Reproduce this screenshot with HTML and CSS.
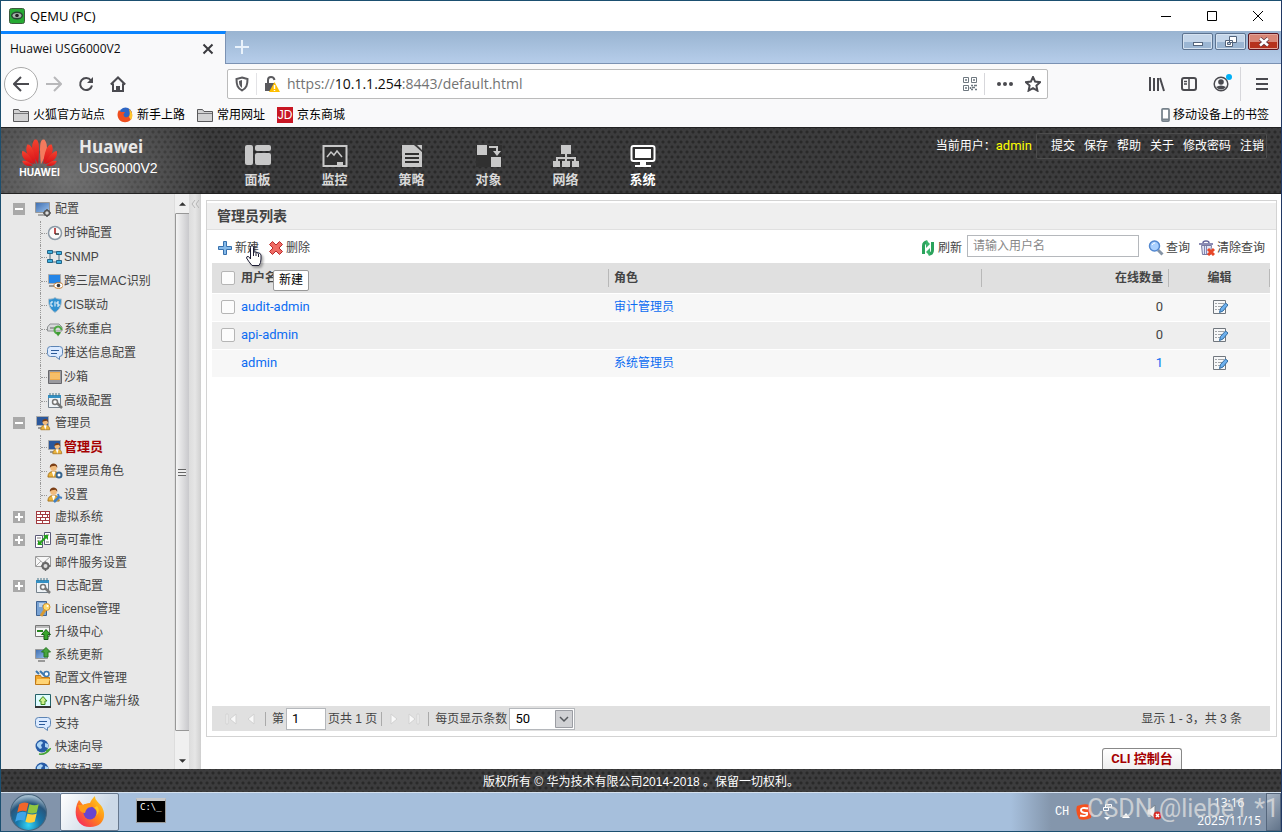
FILE: index.html
```html
<!DOCTYPE html>
<html lang="zh-CN">
<head>
    <meta charset="UTF-8">
    <meta name="viewport" content="width=device-width, initial-scale=1.0">
    <title>Huawei USG6000V2</title>
    <link rel="stylesheet" href="styles.css">
</head>
<body>
    <!-- 图标 -->
    <svg class="sprite" aria-hidden="true">
        <defs>
            <linearGradient id="gScreen" x1="0" y1="0" x2="1" y2="1"><stop offset="0" stop-color="#3d6db0"/><stop offset="1" stop-color="#9cc3ee"/></linearGradient>
            <linearGradient id="gRed" x1="0" y1="0" x2="0" y2="1"><stop offset="0" stop-color="#f4432f"/><stop offset="1" stop-color="#d60f16"/></linearGradient>
            <linearGradient id="gFox" x1="1" y1="0" x2="0" y2="1"><stop offset="0" stop-color="#ffe226"/><stop offset=".45" stop-color="#ff8a16"/><stop offset="1" stop-color="#f5156c"/></linearGradient>
            <radialGradient id="gOrb" cx=".5" cy=".85" r=".8"><stop offset="0" stop-color="#35d5f5"/><stop offset=".4" stop-color="#1677ab"/><stop offset=".75" stop-color="#28567c"/><stop offset="1" stop-color="#9fb9cc"/></radialGradient>
        </defs>
        <symbol id="i-folder" viewBox="0 0 16 16"><path d="M.5 14.500v-12h5l1.500 2h8.500v10z" fill="#d2d2d3" stroke="#58585a"/><path d="M1 6.500h14" stroke="#77777a"/></symbol>
        <symbol id="i-firefox" viewBox="0 0 32 32"><path d="M3 8L5 4l4 5c2-1 4-2 7-2 1-3 3-5 5-7 0 5 4 6 7 11 5 9 1 20-12 20C4 31-1 20 3 8z" fill="url(#gFox)"/><circle cx="16" cy="17" r="6.500" fill="#6845cf"/><path d="M4 9l5 0c3-2 7-1 9 2-5 0-6 3-7 6-4 0-6-3-7-8z" fill="#ff9b19"/><path d="M20 12c3 1 4 4 2 8 3-3 4-7 1-10z" fill="#ffcb20"/></symbol>
        <symbol id="i-firefox-old" viewBox="0 0 16 16"><circle cx="8.500" cy="7" r="6.500" fill="#2d65c4"/><path d="M2 3l2 2 4 0-1.500 2.500C7 11 10 11 12 9c2-2 1-5 0-7 4 3 4 8 1.500 11-3 3-8 3-11 0C0 10 0 6 2 3z" fill="#ee4e1f"/><path d="M12 2c4 3 4 8 2 11l-2-3c1-2 1-5 0-8z" fill="#ffc62b"/></symbol>
        <symbol id="i-expand" viewBox="0 0 12 12"><path d="M0 0h12v12H0z" fill="#a9a9a9"/><path d="M2 6h8M6 2v8" stroke="#fff" stroke-width="2"/></symbol>
        <symbol id="i-collapse" viewBox="0 0 12 12"><path d="M0 0h12v12H0z" fill="#a9a9a9"/><path d="M2 6h8" stroke="#fff" stroke-width="2"/></symbol>
        <symbol id="i-config" viewBox="0 0 16 16"><path d="M.5 1.500h14v10H.5z" fill="url(#gScreen)" stroke="#999"/><path d="M3 14h7" stroke="#aaa" stroke-width="2"/><circle cx="12" cy="12" r="2.500" fill="#ddd" stroke="#555" stroke-width="1.500"/><path d="M12 8v1.500M12 14.500V16M8 12h1.500M14.500 12H16" stroke="#555" stroke-width="1.500"/></symbol>
        <symbol id="i-clock" viewBox="0 0 16 16"><circle cx="8" cy="8" r="6.500" fill="#fafafa" stroke="#8b99a6" stroke-width="1.500"/><path d="M8 3v6" stroke="#a61515" stroke-width="1.500"/><path d="M8 9h4" stroke="#333" stroke-width="1.500"/></symbol>
        <symbol id="i-snmp" viewBox="0 0 16 16"><path d="M3 4v8M12 4v8M3 3h9M3 13h9" stroke="#4d6b7c" fill="none"/><g fill="#3eb1e0" stroke="#256487"><path d="M.5 1.500h5v3h-5zM9.500 2.500h5v3h-5zM.5 10.500h5v3h-5zM9.500 11.500h5v3h-5z"/></g></symbol>
        <symbol id="i-mac" viewBox="0 0 16 16"><path d="M1.500 1.500h12v9h-12z" fill="#2485e7" stroke="#aaa"/><path d="M2 13h6" stroke="#999" stroke-width="2"/><ellipse cx="11.500" cy="12.500" rx="4.500" ry="2.800" fill="#fff" stroke="#c57827"/><circle cx="11.500" cy="12.500" r="1.800" fill="#3b3c40"/></symbol>
        <symbol id="i-cis" viewBox="0 0 16 16"><path d="M8 .5c2 1.500 4 1.500 6.500 1.500 0 6-1 10-6.500 13.500C2.500 12 1.500 8 1.500 2 4 2 6 2 8 .5z" fill="#2f91d1" stroke="#b5c3cc"/><path d="M6 5H4v4h2M8 4.500v5M12 5h-2v2h2v2h-2" stroke="#fff" fill="none"/></symbol>
        <symbol id="i-restart" viewBox="0 0 16 16"><path d="M.5 6l2.500-3h9l3 3v4H.5z" fill="#d7d9da" stroke="#8e9193"/><path d="M3 7h5" stroke="#666"/><path d="M14.500 9a3.500 3.500 0 1 0-1.500 3" stroke="#4fa944" stroke-width="2" fill="none"/><path d="M9 11h5l-3 4.500z" fill="#3f9b33"/></symbol>
        <symbol id="i-message" viewBox="0 0 16 16"><path d="M3.500 1.500h9q3 0 3 3v4q0 3-3 3l0 3-4-3h-5q-3 0-3-3v-4q0-3 3-3z" fill="#dbeaff" stroke="#5c84b4"/><path d="M4 5.500h8M4 8.500h6" stroke="#2c5a98"/></symbol>
        <symbol id="i-sandbox" viewBox="0 0 16 16"><path d="M1.500 1.500h13v13h-13z" fill="#9a9a9e" stroke="#66666b"/><path d="M3 3h10v8H3z" fill="#eeaa4b"/><path d="M3 5h10M3 7h10M3 9h10" stroke="#ffd386"/></symbol>
        <symbol id="i-advanced" viewBox="0 0 16 16"><path d="M1.500 2.500h12v12h-12z" fill="#eef3f7" stroke="#76828c"/><path d="M1 2h13v3H1z" fill="#3390c4"/><path d="M3 0v3M6 0v3M9 0v3M12 0v3" stroke="#467286"/><circle cx="8" cy="9" r="2.500" fill="#fff" stroke="#777" stroke-width="1.500"/><path d="M10 10l5 5" stroke="#777" stroke-width="2.500"/></symbol>
        <symbol id="i-person" viewBox="0 0 16 16"><path d="M1 15c0-4 2-6 6-6s6 2 6 6z" fill="#eab33c" stroke="#a7731c"/><path d="M5 9l2 6 2-6z" fill="#fff"/><circle cx="7" cy="5" r="3.500" fill="#f1bb7c"/><path d="M3 5c-.5-6 8.500-6 8 0l-2-2-4 .5z" fill="#7b3e15"/></symbol>
        <symbol id="i-admin" viewBox="0 0 16 16"><path d="M1.500 1.500h12v9h-12z" fill="#2b589c" stroke="#aaa"/><path d="M3 13h4" stroke="#999" stroke-width="2"/><use href="#i-person" x="5" y="3" width="12" height="13"/></symbol>
        <symbol id="i-role" viewBox="0 0 16 16"><use href="#i-person" width="15" height="15"/><circle cx="12" cy="12" r="2.500" fill="#fff" stroke="#38658e" stroke-width="2"/></symbol>
        <symbol id="i-setting" viewBox="0 0 16 16"><use href="#i-person" width="15" height="15"/><path d="M7 15l5-5" stroke="#3f7fc4" stroke-width="2.500"/><path d="M11 7l1 3 3 1" stroke="#3f7fc4" stroke-width="2" fill="none"/></symbol>
        <symbol id="i-vsys" viewBox="0 0 16 16"><path d="M1 2h14v13H1z" fill="#fff"/><path d="M1 2.500h14M1 5.500h14M1 8.500h14M1 11.500h14M1 14.500h14M1.500 2v13M14.500 2v13M5.500 3v2M10.500 3v2M7.500 6v2M12.500 6v2M5.500 9v2M10.500 9v2M7.500 12v2" stroke="#a23b40"/></symbol>
        <symbol id="i-ha" viewBox="0 0 16 16"><path d="M.5 3.500h7v12h-7zM9.500 .5h6v12h-6z" fill="#fff" stroke="#5b5a78"/><path d="M2 6h4M2 9h4M2 12h4M11 3h3M11 10h3" stroke="#777"/><path d="M5 11l6-6" stroke="#25a11c" stroke-width="2"/><path d="M8 3h5v5zM3 8v5h5z" fill="#25a11c"/></symbol>
        <symbol id="i-mail" viewBox="0 0 16 16"><path d="M.5 1.500h15v10H.5z" fill="#f7f7f7" stroke="#999"/><path d="M1 2l7 6 7-6M1 11l5-5M15 11l-5-5" stroke="#aaa" fill="none"/><circle cx="10.500" cy="11" r="3" fill="#ddd" stroke="#686868" stroke-width="2"/><path d="M10.500 6.500v2M10.500 14v2M6 11h2M13.500 11h2" stroke="#686868" stroke-width="1.500"/></symbol>
        <symbol id="i-license" viewBox="0 0 16 16"><path d="M1.500 .5h10v14h-10z" fill="#79a3d4" stroke="#3e6291"/><path d="M4 3h5M4 5h3" stroke="#fff"/><path d="M10 9l-4 6" stroke="#d99a31" stroke-width="3"/><circle cx="11.500" cy="6" r="3.500" fill="#ffdc70" stroke="#d5912b"/><circle cx="12.500" cy="5" r="1" fill="#fff"/></symbol>
        <symbol id="i-upgrade" viewBox="0 0 16 16"><path d="M.5 1.500h14v11H.5z" fill="#f7f7f7" stroke="#777"/><path d="M1 3h13" stroke="#bbb" stroke-width="2"/><path d="M2 7h6" stroke="#26851d" stroke-width="2"/><path d="M11 5.500l4.500 5H13v5H9v-5H6.500z" fill="#39a52b" stroke="#195e16"/></symbol>
        <symbol id="i-update" viewBox="0 0 16 16"><path d="M.5 2.500h12v9H.5z" fill="url(#gScreen)" stroke="#999"/><path d="M3 14h7" stroke="#999" stroke-width="2"/><path d="M11 .5L15.500 5H13v5H9V5H6.500z" fill="#47a53e" stroke="#277622"/></symbol>
        <symbol id="i-files" viewBox="0 0 16 16"><path d="M1 1l3 3M5 1l5 5" stroke="#3d78ae" stroke-width="2"/><circle cx="11.500" cy="4" r="2.500" fill="#fff" stroke="#3d78ae" stroke-width="1.500"/><path d="M.5 14.500v-9h5l1 2h8v7z" fill="#f2a82f" stroke="#bf7919"/><path d="M2 9h13l-2 5H1z" fill="#ffd475"/></symbol>
        <symbol id="i-vpn" viewBox="0 0 16 16"><path d="M.5 1.500h15v13H.5z" fill="#dffcff" stroke="#246168"/><path d="M0 14h16" stroke="#333" stroke-width="2"/><path d="M8 3.500L12 8h-2v3.500H6V8H4z" fill="#cef08f" stroke="#3a8b1e"/></symbol>
        <symbol id="i-globe" viewBox="0 0 16 16"><circle cx="7" cy="7" r="6.500" fill="#275ca7"/><path d="M2 5c3-4 5-3 6-1L6 6l1 3-2 1-3-3zM10 4l3 1v4l-3-1z" fill="#add6f6"/><path d="M4 15q7 1 11-5l-4 2" fill="none" stroke="#42a334" stroke-width="1.500"/></symbol>
        <symbol id="i-plus" viewBox="0 0 16 16"><path d="M6.500 1.500h3v5h5v3h-5v5h-3v-5h-5v-3h5z" fill="#85b9e8" stroke="#3770ad"/></symbol>
        <symbol id="i-delete" viewBox="0 0 16 16"><path d="M4.500 1.500L8 5l3.500-3.500 3 3L11 8l3.500 3.500-3 3L8 11l-3.500 3.500-3-3L5 8 1.500 4.500z" fill="#ef6b64" stroke="#b92c2c"/></symbol>
        <symbol id="i-refresh" viewBox="0 0 16 16"><path d="M3.500 14V6q0-4 4-4M12.500 2v8q0 4-4 4" fill="none" stroke="#2ba35c" stroke-width="3"/><path d="M6 0l4 4-4 4zM10 8v8l-4-4z" fill="#39b46b"/></symbol>
        <symbol id="i-search" viewBox="0 0 16 16"><path d="M10 10l4.500 4.500" stroke="#8694a5" stroke-width="3"/><circle cx="6.500" cy="6" r="5" fill="#aad1ff" stroke="#5287cf" stroke-width="1.500"/><path d="M4 5q1-2 3-2" stroke="#fff" fill="none"/></symbol>
        <symbol id="i-clear" viewBox="0 0 16 16"><path d="M0 4h14M4 3q0-2 3-2t3 2" stroke="#65659a" stroke-width="1.500" fill="none"/><path d="M2.500 5.500h10l-1 9h-8z" fill="#e1e4f5" stroke="#777aa2"/><path d="M5.500 6v8M7.500 6v8" stroke="#8588b2"/><path d="M9 9l6 6M15 9l-6 6" stroke="#e74728" stroke-width="3"/></symbol>
        <symbol id="i-edit" viewBox="0 0 16 16"><path d="M1.500 1.500h12v13h-12z" fill="#f7f8f9" stroke="#71777e"/><path d="M3 4.500h2M6 4.500h6M3 7.500h2M6 7.500h4M3 10.500h2M6 10.500h2" stroke="#a2a5a8"/><path d="M7.500 13.500l1-4 5-5.500 2.500 2-5 6z" fill="#6db0ee" stroke="#326b9f"/></symbol>
    </svg>

    <div class="window">
        <header class="titlebar">
            <svg class="qemu" viewBox="0 0 16 16"><rect x=".5" y=".5" width="15" height="15" rx="2" fill="#26aa33" stroke="#3d5a3d"/><ellipse cx="8" cy="7.500" rx="6" ry="4" fill="#294434"/><ellipse cx="8" cy="7.500" rx="4.500" ry="2.500" fill="#a8b3aa"/><circle cx="8" cy="7.500" r="1.800" fill="#222"/></svg>
            <span>QEMU (PC)</span>
            <div class="window-btns">
                <button aria-label="最小化"><svg viewBox="0 0 12 12"><path d="M1 6.500h10"/></svg></button>
                <button aria-label="最大化"><svg viewBox="0 0 12 12"><path d="M1.500 1.500h9v9h-9z"/></svg></button>
                <button aria-label="关闭"><svg viewBox="0 0 12 12"><path d="M1 1l10 10M11 1L1 11"/></svg></button>
            </div>
        </header>

        <div class="tabs">
            <div class="tab">
                <span>Huawei USG6000V2</span>
                <button aria-label="关闭标签页"><svg viewBox="0 0 12 12"><path d="M1.500 1.500l9 9M10.500 1.500l-9 9"/></svg></button>
            </div>
            <button class="tab-new" aria-label="新建标签页"><svg viewBox="0 0 16 16"><path d="M8 1v14M1 8h14"/></svg></button>
            <div class="aero-btns">
                <button aria-label="最小化"><svg viewBox="0 0 16 12"><rect x="3.500" y="6.500" width="9" height="3" fill="#fff" stroke="#53647b"/></svg></button>
                <button aria-label="还原"><svg viewBox="0 0 16 12"><path d="M6.500 .5h7v6h-7zM2.500 4.500h7v6h-7z" fill="#fff" stroke="#53647b"/><path d="M4.500 6.500h3v2h-3z" fill="#b7c9de" stroke="#53647b"/></svg></button>
                <button class="aero-close" aria-label="关闭"><svg viewBox="0 0 16 12"><path d="M4 2.500l8 7M12 2.500l-8 7" stroke="#5b3440" stroke-width="4"/><path d="M4 2.500l8 7M12 2.500l-8 7" stroke="#fff" stroke-width="2.500"/></svg></button>
            </div>
        </div>

        <div class="navbar">
            <div class="nav-left">
                <button class="nav-back" aria-label="后退"><svg viewBox="0 0 16 16"><path d="M16 8H1M8 1L1 8l7 7"/></svg></button>
                <button class="nav-forward" aria-label="前进"><svg viewBox="0 0 16 16"><path d="M0 8h15M8 1l7 7-7 7"/></svg></button>
                <button aria-label="刷新页面"><svg viewBox="0 0 16 16"><path d="M13 4.500A6 6 0 1 0 14 9.500"/><path d="M15 1v6H9z" fill="#4a4a4f" stroke="none"/></svg></button>
                <button aria-label="主页"><svg viewBox="0 0 16 16"><path d="M.8 8.500L8 1.500l7.200 7M3 7.500V15h10V7.500M7 15v-4h2v4"/></svg></button>
            </div>
            <div class="urlbar">
                <svg class="ico" viewBox="0 0 16 16"><path d="M8 1.500l5.500 1.500c0 6-1 9-5.500 11.500C3.500 12 2.500 9 2.500 3z" fill="none" stroke="#5a5a5e" stroke-width="2"/><path d="M8 4v8C5.500 10 5 8 5 5z" fill="#5a5a5e"/></svg>
                <svg class="ico lock" viewBox="0 0 16 16"><path d="M4 8V4q0-3 3-3t3.500 3" fill="none" stroke="#5a5a5e" stroke-width="2"/><path d="M1 7h9v8H1z" fill="#5a5a5e"/><path d="M10.500 6l5.500 10H5z" fill="#ffbf00"/><path d="M10.500 9v4M10.500 14v1" stroke="#fff" stroke-width="1.500"/></svg>
                <div class="url" role="textbox" aria-label="网址" contenteditable="true" spellcheck="false">https://<b>10.1.1.254</b>:8443/default.html</div>
                <svg class="ico" viewBox="0 0 16 16" fill="none" stroke="#6e7880"><path d="M1.500 1.500h5v5h-5zM9.500 1.500h5v5h-5zM1.500 9.500h5v5h-5z"/><path d="M3 4h2M11 4h2M3 12h2M9 9.500h2M12 9.500h3M10 11.500h3M9 13.500h2M13 13.500h2M8.500 11v2" stroke-width="1.500"/></svg>
                <i class="url-sep"></i>
                <button aria-label="页面操作"><svg class="ico" viewBox="0 0 16 16" fill="#4a4a4f"><circle cx="2" cy="8" r="2"/><circle cx="8" cy="8" r="2"/><circle cx="14" cy="8" r="2"/></svg></button>
                <button aria-label="添加书签"><svg class="ico" viewBox="0 0 16 16"><path d="M8 1l2.100 4.600 5 .6-3.700 3.400 1 5L8 12.100l-4.400 2.500 1-5L.9 6.200l5-.6z" fill="none" stroke="#4a4a4f" stroke-width="2"/></svg></button>
            </div>
            <div class="nav-right">
                <button aria-label="书签库"><svg viewBox="0 0 16 16"><path d="M1 1v14M5 2v13M9 2v13M11 2l4 13"/></svg></button>
                <button aria-label="侧栏"><svg viewBox="0 0 16 16"><rect x="1" y="2" width="14" height="12" rx="2"/><path d="M8 2v12M3 5.500h3M3 8h3" stroke-width="1.500"/></svg></button>
                <button class="account" aria-label="账户"><svg viewBox="0 0 16 16"><circle cx="8" cy="8" r="6.800" stroke-width="1.500"/><circle cx="8" cy="6" r="2.800" fill="#4a4a4f" stroke="none"/><path d="M3 11q5-3 10 0-5 5-10 0z" fill="#4a4a4f" stroke="none"/></svg></button>
                <i class="url-sep"></i>
                <button aria-label="菜单"><svg viewBox="0 0 16 16"><path d="M2 3h12M2 8h12M2 13h12"/></svg></button>
            </div>
        </div>

        <nav class="bookmarks">
            <a href="#"><svg class="ico"><use href="#i-folder"/></svg>火狐官方站点</a>
            <a href="#"><svg class="ico"><use href="#i-firefox-old"/></svg>新手上路</a>
            <a href="#"><svg class="ico"><use href="#i-folder"/></svg>常用网址</a>
            <a href="#"><span class="jd">JD</span>京东商城</a>
            <a href="#" class="mobile"><svg viewBox="0 0 10 16"><rect x="1" y="1" width="8" height="14" rx="1" fill="#fff" stroke="#76818a" stroke-width="2"/><path d="M1 13h8" stroke="#76818a" stroke-width="2"/></svg>移动设备上的书签</a>
        </nav>

        <div class="banner">
            <div class="brand">
                <div class="logo">
                    <svg viewBox="0 0 40 32" fill="url(#gRed)"><path d="M18.500 29C12 19 10 9 14.500 3c5-2 6 6 4 26z"/><path d="M21.500 29C28 19 30 9 25.500 3c-5-2-6 6-4 26z" fill="#f47a5d"/><path d="M16 29C7 21 4 15 7 8c4-1 8 7 9 21zM24 29c9-8 12-14 9-21-4-1-8 7-9 21z"/><path d="M14.500 29C5 27 0 22 1.500 15 6 15 11 22 14.500 29zM25.500 29c9.500-2 14.500-7 13-14-4.500 0-9.500 7-13 14z"/><path d="M13 30.500C7 32 3 30 1.500 25.500 6 24.500 10 27 13 30.500zM27 30.500c6 1.500 10-.5 11.500-5C34 24.500 30 27 27 30.500z"/></svg>
                    <span>HUAWEI</span>
                </div>
                <div class="product">
                    <strong>Huawei</strong>
                    <span>USG6000V2</span>
                </div>
            </div>
            <nav class="modules">
                <a href="#"><svg viewBox="0 0 26 22"><rect width="8" height="20" rx="2"/><rect x="10" width="16" height="6" rx="2"/><rect x="10" y="8" width="16" height="12" rx="2"/></svg>面板</a>
                <a href="#"><svg viewBox="0 0 26 22"><path d="M1.500 1h23v20h-23z" fill="#303030" stroke="#c8c8c8" stroke-width="2"/><path d="M5 12l4-5 3 3 3-4 5 6" fill="none" stroke="#c8c8c8" stroke-width="1.500"/><path d="M15 17h6v3h-6z"/></svg>监控</a>
                <a href="#"><svg viewBox="0 0 26 22"><path d="M3 0h12l8 7v15H3zM18 0h5v5z"/><path d="M6 9h14M6 13h14M6 17h14" stroke="#303030" stroke-width="2"/></svg>策略</a>
                <a href="#"><svg viewBox="0 0 26 22"><path d="M0 0h26v22H0z" fill="#303030"/><path d="M1 0h10v10H1zM15 12h10v10H15z"/><path d="M13 2h8v5" fill="none" stroke="#c8c8c8" stroke-width="2"/><path d="M17 6h8l-4 5z"/></svg>对象</a>
                <a href="#"><svg viewBox="0 0 26 22"><path d="M8 0h10v9H8zM0 16h7v6H0zM9 16h8v6H9zM19 16h7v6h-7z"/><path d="M13 9v8M4 17v-4h18v4" fill="none" stroke="#c8c8c8" stroke-width="2"/></svg>网络</a>
                <a href="#" class="current"><svg viewBox="0 0 26 22"><rect x="1.500" y="1" width="23" height="15" rx="2" fill="#303030" stroke="#fff" stroke-width="2"/><path d="M5 4h16v9H5zM10 17h6v3h5v2H5v-2h5z"/></svg>系统</a>
            </nav>
            <div class="account-bar">
                <span>当前用户：<em>admin</em></span>
                <div class="account-links">
                    <a href="#">提交</a><a href="#">保存</a><a href="#">帮助</a><a href="#">关于</a><a href="#">修改密码</a><a href="#">注销</a>
                </div>
            </div>
        </div>

        <div class="content">
            <aside class="sidebar">
                <ul class="tree">
                    <li>
                        <a href="#"><svg class="toggle"><use href="#i-collapse"/></svg><svg class="ico"><use href="#i-config"/></svg>配置</a>
                        <ul>
                            <li><a href="#"><svg class="ico"><use href="#i-clock"/></svg>时钟配置</a></li>
                            <li><a href="#"><svg class="ico"><use href="#i-snmp"/></svg>SNMP</a></li>
                            <li><a href="#"><svg class="ico"><use href="#i-mac"/></svg>跨三层MAC识别</a></li>
                            <li><a href="#"><svg class="ico"><use href="#i-cis"/></svg>CIS联动</a></li>
                            <li><a href="#"><svg class="ico"><use href="#i-restart"/></svg>系统重启</a></li>
                            <li><a href="#"><svg class="ico"><use href="#i-message"/></svg>推送信息配置</a></li>
                            <li><a href="#"><svg class="ico"><use href="#i-sandbox"/></svg>沙箱</a></li>
                            <li><a href="#"><svg class="ico"><use href="#i-advanced"/></svg>高级配置</a></li>
                        </ul>
                    </li>
                    <li>
                        <a href="#"><svg class="toggle"><use href="#i-collapse"/></svg><svg class="ico"><use href="#i-admin"/></svg>管理员</a>
                        <ul>
                            <li><a href="#" class="selected"><svg class="ico"><use href="#i-admin"/></svg>管理员</a></li>
                            <li><a href="#"><svg class="ico"><use href="#i-role"/></svg>管理员角色</a></li>
                            <li><a href="#"><svg class="ico"><use href="#i-setting"/></svg>设置</a></li>
                        </ul>
                    </li>
                    <li><a href="#"><svg class="toggle"><use href="#i-expand"/></svg><svg class="ico"><use href="#i-vsys"/></svg>虚拟系统</a></li>
                    <li><a href="#"><svg class="toggle"><use href="#i-expand"/></svg><svg class="ico"><use href="#i-ha"/></svg>高可靠性</a></li>
                    <li><a href="#"><span class="toggle"></span><svg class="ico"><use href="#i-mail"/></svg>邮件服务设置</a></li>
                    <li><a href="#"><svg class="toggle"><use href="#i-expand"/></svg><svg class="ico"><use href="#i-advanced"/></svg>日志配置</a></li>
                    <li><a href="#"><span class="toggle"></span><svg class="ico"><use href="#i-license"/></svg>License管理</a></li>
                    <li><a href="#"><span class="toggle"></span><svg class="ico"><use href="#i-upgrade"/></svg>升级中心</a></li>
                    <li><a href="#"><span class="toggle"></span><svg class="ico"><use href="#i-update"/></svg>系统更新</a></li>
                    <li><a href="#"><span class="toggle"></span><svg class="ico"><use href="#i-files"/></svg>配置文件管理</a></li>
                    <li><a href="#"><span class="toggle"></span><svg class="ico"><use href="#i-vpn"/></svg>VPN客户端升级</a></li>
                    <li><a href="#"><span class="toggle"></span><svg class="ico"><use href="#i-message"/></svg>支持</a></li>
                    <li><a href="#"><span class="toggle"></span><svg class="ico"><use href="#i-globe"/></svg>快速向导</a></li>
                    <li><a href="#"><span class="toggle"></span><svg class="ico"><use href="#i-globe"/></svg>链接配置</a></li>
                </ul>
                <div class="scrollbar">
                    <svg viewBox="0 0 8 4"><path d="M0 4l4-4 4 4z"/></svg>
                    <div class="thumb"><i></i></div>
                    <svg viewBox="0 0 8 4"><path d="M0 0l4 4 4-4z"/></svg>
                </div>
                <button class="splitter" aria-label="收起菜单"><svg viewBox="0 0 8 8"><path d="M4 0L1 4l3 4M8 0L5 4l3 4"/></svg></button>
            </aside>

            <main class="main">
                <section class="panel">
                    <h1>管理员列表</h1>
                    <div class="toolbar">
                        <div class="create">
                            <button><svg class="ico"><use href="#i-plus"/></svg>新建</button>
                            <span class="tooltip" role="tooltip">新建</span>
                            <svg class="cursor" viewBox="0 0 18 22"><path d="M5.500 14V2.500q0-2 1.500-2t1.500 2V7q3-.5 4 1 3-.5 3.500 2v4q0 4-2 6.500H7Q4 17 1.500 13q0-2 2-1.500z" fill="#fff" stroke="#1d1d35"/><path d="M8.500 7v4M11 7.500V11M13.500 9v3" stroke="#1d1d35"/></svg>
                        </div>
                        <button><svg class="ico"><use href="#i-delete"/></svg>删除</button>
                        <form class="search">
                            <button type="button"><svg class="ico"><use href="#i-refresh"/></svg>刷新</button>
                            <input type="text" id="userName" aria-label="用户名" placeholder="请输入用户名">
                            <button type="button"><svg class="ico"><use href="#i-search"/></svg>查询</button>
                            <button type="button"><svg class="ico"><use href="#i-clear"/></svg>清除查询</button>
                        </form>
                    </div>
                    <table>
                        <colgroup><col class="col-check"><col class="col-name"><col><col class="col-online"><col class="col-edit"></colgroup>
                        <thead>
                            <tr>
                                <th><input type="checkbox" aria-label="全选"></th>
                                <th class="sep">用户名</th>
                                <th class="sep">角色</th>
                                <th class="sep num">在线数量</th>
                                <th class="sep center">编辑</th>
                            </tr>
                        </thead>
                        <tbody>
                            <tr>
                                <td><input type="checkbox" aria-label="audit-admin"></td>
                                <td><a href="#">audit-admin</a></td>
                                <td><a href="#">审计管理员</a></td>
                                <td class="num">0</td>
                                <td class="center"><button aria-label="编辑 audit-admin"><svg class="ico"><use href="#i-edit"/></svg></button></td>
                            </tr>
                            <tr>
                                <td><input type="checkbox" aria-label="api-admin"></td>
                                <td><a href="#">api-admin</a></td>
                                <td></td>
                                <td class="num">0</td>
                                <td class="center"><button aria-label="编辑 api-admin"><svg class="ico"><use href="#i-edit"/></svg></button></td>
                            </tr>
                            <tr>
                                <td></td>
                                <td><a href="#">admin</a></td>
                                <td><a href="#">系统管理员</a></td>
                                <td class="num"><a href="#">1</a></td>
                                <td class="center"><button aria-label="编辑 admin"><svg class="ico"><use href="#i-edit"/></svg></button></td>
                            </tr>
                        </tbody>
                    </table>
                    <div class="pager">
                        <button aria-label="首页"><svg viewBox="0 0 12 12"><path d="M1 1h2v10H1zM11 1v10L5 6z"/></svg></button>
                        <button aria-label="上一页"><svg viewBox="0 0 12 12"><path d="M9 1v10L3 6z"/></svg></button>
                        <i class="pager-sep"></i>
                        <label for="pageNo">第</label>
                        <input type="text" id="pageNo" value="1">
                        <span>页共 1 页</span>
                        <i class="pager-sep"></i>
                        <button aria-label="下一页"><svg viewBox="0 0 12 12"><path d="M3 1v10l6-5z"/></svg></button>
                        <button aria-label="末页"><svg viewBox="0 0 12 12"><path d="M9 1h2v10H9zM1 1v10l6-5z"/></svg></button>
                        <i class="pager-sep"></i>
                        <label for="pageSize">每页显示条数</label>
                        <span class="select">
                            <select id="pageSize"><option>20</option><option selected>50</option><option>100</option></select>
                            <svg viewBox="0 0 18 18"><path d="M.5 .5h17v17H.5z" fill="#d0d1d4" stroke="#9b9da3"/><path d="M5 7l4 4 4-4" fill="none" stroke="#55585d" stroke-width="1.500"/></svg>
                        </span>
                        <span class="total">显示 1 - 3，共 3 条</span>
                    </div>
                </section>
                <button class="cli">CLI 控制台</button>
            </main>
        </div>

        <footer class="copyright">版权所有 © 华为技术有限公司2014-2018 。保留一切权利。</footer>

        <div class="taskbar">
            <button class="start" aria-label="开始"><svg viewBox="0 0 36 36"><circle cx="18" cy="18" r="17.500" fill="url(#gOrb)" stroke="#48657d"/><path d="M9 10q4-3 9-1l-2 8q-5-2-9 1z" fill="#f0652a"/><path d="M19 10q5 2 9 0l-2 8q-5 2-9 0z" fill="#8fc640"/><path d="M7 19q4-3 9-1l-2 8q-5-2-9 1z" fill="#3fa4e8"/><path d="M17 19q5 2 9 0l-2 8q-5 2-9 0z" fill="#ffce3c"/></svg></button>
            <button class="task" aria-label="Firefox"><svg viewBox="0 0 32 32"><use href="#i-firefox"/></svg></button>
            <button class="cmd" aria-label="命令提示符"><span>C:\_</span></button>
            <div class="tray">
                <span class="lang">CH</span>
                <svg class="ico" viewBox="0 0 16 16"><path d="M1 2q7-3 13-1 2 6 1 13-7 3-12 1Q-1 8 1 2z" fill="#f4511e"/><path d="M12 4.500Q5 3 5 6t6 3q1 4-7 2.500" fill="none" stroke="#fff" stroke-width="2"/></svg>
                <svg class="tray-ime" viewBox="0 0 10 16"><path d="M3.500.5h6v3h-6zM1.500 3.500h5v3h-5z" fill="none" stroke="#fff"/><path d="M2 13h6l-3 3z" fill="#fff"/></svg>
                <svg class="tray-up" viewBox="0 0 8 5"><path d="M0 5l4-5 4 5z" fill="#fff"/></svg>
                <svg class="ico" viewBox="0 0 16 16"><path d="M1 5h3l5-4v14l-5-4H1z" fill="#f4f4f4" stroke="#7a858f"/><circle cx="11.500" cy="11.500" r="4" fill="#d52e27"/><path d="M10 10l3 3M13 10l-3 3" stroke="#fff" stroke-width="1.500"/></svg>
                <div class="clock"><span>13:16</span><span>2025/11/15</span></div>
                <button class="desktop" aria-label="显示桌面"></button>
            </div>
            <div class="watermark">CSDN @liebe1 *1</div>
        </div>
    </div>
</body>
</html>
```
FILE: styles.css
```css
* {
    margin: 0;
    padding: 0;
    box-sizing: border-box;
}

body {
    font-family: "Liberation Sans", "Noto Sans CJK SC", sans-serif;
    font-size: 12px;
    line-height: 16px;
    color: #444;
}

a {
    color: inherit;
    text-decoration: none;
}

ul {
    list-style: none;
}

button {
    display: flex;
    align-items: center;
    justify-content: center;
    border: none;
    background: none;
    font: inherit;
    color: inherit;
}

input,
select {
    font: inherit;
    color: #000;
}

.sprite {
    position: absolute;
    width: 0;
    height: 0;
}

.ico {
    width: 16px;
    height: 16px;
    flex: none;
}

.window {
    display: flex;
    flex-direction: column;
    height: 100vh;
    border: 1px solid #1b4f70;
    border-right-color: #203864;
    background: #fff;
    overflow: hidden;
}

/* 虚拟机标题栏 */
.titlebar {
    display: flex;
    align-items: center;
    flex: none;
    height: 30px;
    padding-left: 8px;
    gap: 5px;
    font-family: "Open Sans", sans-serif;
    font-size: 13px;
    color: #000;
}

.qemu {
    width: 16px;
    height: 16px;
}

.window-btns {
    display: flex;
    margin-left: auto;
}

.window-btns button {
    width: 46px;
    height: 30px;
}

.window-btns svg {
    width: 12px;
    height: 12px;
    fill: none;
    stroke: #000;
}

/* 浏览器 */
.tabs {
    display: flex;
    flex: none;
    height: 33px;
    background: linear-gradient(#99b4d1, #b6cdea);
    border-bottom: 1px solid #7b92b3;
}

.tab {
    display: flex;
    align-items: center;
    justify-content: space-between;
    width: 225px;
    height: 33px;
    padding: 0 11px 0 9px;
    background: #f9f9fa;
    border-top: 3px solid #0a84ff;
    border-right: 1px solid #7b92b3;
    font-family: "Open Sans", sans-serif;
    color: #0c0c0d;
}

.tab svg {
    width: 12px;
    height: 12px;
    stroke: #3a3a3e;
    stroke-width: 2;
}

.tab-new {
    width: 32px;
}

.tab-new svg {
    width: 16px;
    height: 16px;
    stroke: #e9f2fb;
    stroke-width: 2;
}

.aero-btns {
    display: flex;
    gap: 2px;
    margin: 2px 2px 0 auto;
}

.aero-btns button {
    width: 31px;
    height: 17px;
    border: 1px solid #5c7390;
    border-radius: 2px;
    box-shadow: inset 0 0 0 1px #d5e2f0;
    background: linear-gradient(#c3d5e9 50%, #9bb6d3 50%);
}

.aero-btns .aero-close {
    border-color: #5a1520;
    box-shadow: inset 0 0 0 1px #e2a69b;
    background: linear-gradient(#d88676 50%, #b6311c 50%);
}

.aero-btns svg {
    flex: none;
    width: 16px;
    height: 12px;
}

.navbar {
    display: grid;
    grid-template-columns: 226px 1fr 233px;
    align-items: center;
    flex: none;
    height: 40px;
    background: #f9f9fa;
}

.navbar button svg {
    width: 16px;
    height: 16px;
    flex: none;
}

.nav-left,
.nav-right {
    display: flex;
    align-items: center;
}

.nav-left svg,
.nav-right svg {
    fill: none;
    stroke: #4a4a4f;
    stroke-width: 2;
}

.nav-left {
    padding-left: 3px;
}

.nav-left button,
.nav-right button {
    width: 32px;
    height: 32px;
}

.nav-left .nav-back {
    width: 34px;
    height: 34px;
    border: 1px solid #aaa;
    border-radius: 50%;
    background: #fff;
}

.nav-left .nav-forward svg {
    stroke: #b8b8ba;
}

.nav-right {
    justify-content: flex-end;
    padding-right: 3px;
}

.account {
    position: relative;
}

.account::after {
    content: "";
    position: absolute;
    top: 6px;
    right: 5px;
    width: 6px;
    height: 6px;
    border-radius: 50%;
    background: #00b0f6;
}

.url-sep {
    width: 1px;
    height: 22px;
    background: #d7d7db;
}

.nav-right .url-sep {
    height: 34px;
    margin: 0 5px 0 3px;
}

.urlbar {
    display: flex;
    align-items: center;
    height: 30px;
    padding: 0 6px;
    gap: 12px;
    border: 1px solid #bbb;
    border-radius: 2px;
    background: #fff;
}

.urlbar .lock {
    border-left: 1px solid #e3e3e6;
    width: 24px;
    height: 22px;
    padding: 3px 0 3px 7px;
    margin-left: -6px;
}

.url {
    flex: 1;
    margin-left: -5px;
    font-family: "Open Sans", sans-serif;
    font-size: 14px;
    line-height: 20px;
    color: #737373;
    white-space: nowrap;
    outline: none;
}

.url b {
    font-weight: normal;
    color: #0c0c0d;
}

.urlbar .url-sep {
    margin: 0 0 0 -6px;
}

.bookmarks {
    display: flex;
    align-items: center;
    flex: none;
    height: 23px;
    padding: 0 12px 2px;
    gap: 12px;
    background: #f9f9fa;
    color: #000;
}

.bookmarks a {
    display: flex;
    align-items: center;
    gap: 4px;
}

.jd {
    width: 16px;
    height: 16px;
    background: #c81623;
    color: #fff;
    text-align: center;
}

.bookmarks .mobile {
    margin-left: auto;
    gap: 3px;
}

.mobile svg {
    width: 9px;
    height: 14px;
}

/* 页头 */
.banner,
.copyright {
    background-color: #3c3c3d;
    background-image: radial-gradient(circle at 2px 2px, #292929 1px, transparent 2px), radial-gradient(circle at 2px 2px, #292929 1px, transparent 2px);
    background-size: 6px 10px;
    background-position: 0 2px, 3px 7px;
}

.banner {
    display: flex;
    flex: none;
    height: 67px;
    border-top: 1px solid #222;
    border-bottom: 1px solid #222;
}

.brand {
    display: flex;
    width: 218px;
    padding: 9px 0 0 18px;
    gap: 19px;
    background: radial-gradient(ellipse 150px 120px at 66px 50px, rgba(150, 150, 150, 0.6), transparent);
}

.logo {
    display: flex;
    flex-direction: column;
    align-items: center;
    width: 41px;
}

.logo svg {
    width: 39px;
    height: 30px;
}

.logo span {
    font-family: Inter, sans-serif;
    font-size: 10px;
    font-weight: 700;
    line-height: 11px;
    color: #fff;
}

.product {
    display: flex;
    flex-direction: column;
    color: #fff;
}

.product strong {
    font-family: "Open Sans", sans-serif;
    font-size: 17px;
    line-height: 20px;
    color: #e9e9e9;
}

.product span {
    font-size: 14px;
    line-height: 22px;
}

.modules {
    display: flex;
}

.modules a {
    display: flex;
    flex-direction: column;
    align-items: center;
    width: 77px;
    padding-top: 17px;
    gap: 4px;
    font-size: 13px;
    font-weight: 700;
    line-height: 18px;
    color: #d8d8d8;
}

.modules svg {
    width: 26px;
    height: 22px;
    fill: #c8c8c8;
}

.modules .current {
    color: #fff;
}

.modules .current svg {
    fill: #fff;
}

.account-bar {
    display: flex;
    align-items: flex-start;
    gap: 4px;
    margin: 5px 14px 0 auto;
    line-height: 26px;
    color: #fff;
}

.account-bar em {
    font-family: Roboto, sans-serif;
    font-size: 13px;
    font-style: normal;
    color: #ff0;
}

.account-links {
    display: flex;
    gap: 9px;
    padding: 0 3px 0 15px;
    box-shadow: inset 0 0 0 1px #4c4c4c;
    border-radius: 2px;
}

/* 左侧菜单 */
.content {
    display: flex;
    flex: 1;
    min-height: 0;
}

.sidebar {
    display: flex;
    flex: none;
    width: 200px;
    overflow: hidden;
    background: #e8e8e8;
}

.tree {
    flex: 1;
    padding-top: 3px;
    overflow: hidden;
}

.tree a {
    display: flex;
    align-items: center;
    height: 23px;
    padding-left: 12px;
    white-space: nowrap;
}

.tree .toggle {
    width: 12px;
    height: 12px;
    margin-right: 10px;
}

.tree .ico {
    margin-right: 4px;
}

.tree ul {
    margin: 1px 0 -2px;
    padding-left: 39px;
}

.tree ul li {
    border-left: 1px dotted #999;
}

.tree ul li:last-child {
    height: 24px;
}

.tree ul a {
    height: 24px;
    padding-left: 0;
}

.tree ul a::before {
    content: "";
    width: 6px;
    border-top: 1px dotted #999;
}

.tree ul .ico {
    margin-right: 1px;
}

.tree .selected {
    font-size: 13px;
    font-weight: 700;
    color: #a60000;
}

.scrollbar {
    display: flex;
    flex-direction: column;
    align-items: center;
    flex: none;
    width: 15px;
    padding: 8px 0 6px;
    background: #f0f0f0;
    border-left: 1px solid #ddd;
}

.scrollbar svg {
    width: 7px;
    height: 4px;
    fill: #333;
}

.thumb {
    display: flex;
    align-items: center;
    justify-content: center;
    flex: 1;
    width: 15px;
    margin: 7px 0 28px;
    border: 1px solid #979797;
    border-radius: 1px;
    background: linear-gradient(90deg, #f4f4f4, #c9c9cc);
}

.thumb i {
    width: 8px;
    height: 7px;
    background: repeating-linear-gradient(#666 0, #666 1px, #eee 1px, #eee 3px);
}

.splitter {
    flex: none;
    width: 12px;
    padding-top: 6px;
    align-items: flex-start;
    background: linear-gradient(90deg, #dcdcdc, #e6e6e6 50%, #cfcfcf);
}

.splitter svg {
    width: 8px;
    height: 8px;
    fill: none;
    stroke: #b5b5b5;
}

/* 主区域 */
.main {
    display: flex;
    flex-direction: column;
    flex: 1;
    min-width: 0;
    padding: 6px 4px 0 5px;
}

.panel {
    display: flex;
    flex-direction: column;
    flex: 1;
    min-height: 0;
    padding: 2px 0 5px;
    border: 1px solid #d3d3d3;
}

.panel h1 {
    height: 27px;
    padding-left: 10px;
    background: #efefef;
    border-bottom: 1px solid #e0e0e0;
    font-size: 14px;
    line-height: 26px;
    color: #444;
}

.toolbar {
    display: flex;
    align-items: center;
    height: 33px;
    padding: 2px 11px 0 10px;
    gap: 9px;
}

.toolbar button {
    gap: 2px;
    white-space: nowrap;
}

.create {
    position: relative;
}

.tooltip {
    position: absolute;
    top: 30px;
    left: 56px;
    z-index: 1;
    padding: 0 5px;
    border: 1px solid #999;
    border-radius: 2px;
    background: #fff;
    line-height: 19px;
    color: #000;
    white-space: nowrap;
}

.cursor {
    position: absolute;
    top: 5px;
    left: 28px;
    z-index: 2;
    width: 18px;
    height: 22px;
    filter: drop-shadow(2px 2px 1px rgba(0, 0, 0, 0.3));
}

.search {
    display: flex;
    align-items: center;
    gap: 9px;
    margin-left: auto;
}

.search input {
    width: 172px;
    height: 22px;
    margin: -4px 0 0 -4px;
    padding: 0 5px;
    border: 1px solid #b5b8bc;
    background: #fff;
}

.search input::placeholder {
    color: #888;
}

table {
    width: calc(100% - 11px);
    margin-left: 5px;
    table-layout: fixed;
    border-collapse: collapse;
}

.col-check {
    width: 29px;
}

.col-name {
    width: 368px;
}

.col-online {
    width: 187px;
}

.col-edit {
    width: 101px;
}

th {
    height: 30px;
    background: #e0e0e0;
    text-align: left;
}

.sep {
    background-image: linear-gradient(#b8b8b8, #b8b8b8);
    background-size: 1px 18px;
    background-position: right center;
    background-repeat: no-repeat;
}

td {
    height: 28px;
    border-top: 1px solid #fff;
    background: #f7f7f7;
    font-family: Roboto, "Noto Sans CJK SC", sans-serif;
}

tbody tr:nth-child(even) td {
    background: #eee;
}

th + th,
td + td {
    padding: 0 5px;
}

th:nth-child(2),
td:nth-child(2) {
    padding-left: 0;
}

td:nth-child(2),
.num {
    font-size: 13px;
}

th.num {
    font-size: 12px;
}

table a {
    color: #0c6cf2;
}

table .num {
    text-align: right;
    padding-right: 6px;
}

.center {
    text-align: center;
}

.center button {
    margin: 0 auto;
}

table input {
    display: block;
    width: 14px;
    height: 14px;
    margin-left: 9px;
    appearance: none;
    border: 1px solid #b5b5b5;
    border-radius: 2px;
    background: #fcfcfc;
}

.pager {
    display: flex;
    align-items: center;
    height: 25px;
    margin: auto 6px 0 5px;
    padding: 0 28px 0 9px;
    background: #e0e0e0;
    white-space: nowrap;
}

.pager button {
    width: 20px;
}

.pager button svg {
    width: 12px;
    height: 12px;
    fill: #f9f9f9;
    stroke: #d2d2d2;
    stroke-width: 1;
}

.pager-sep {
    width: 1px;
    height: 14px;
    margin: 0 6px 0 4px;
    background: #aaa;
}

.pager input,
.pager select {
    height: 22px;
    border: 1px solid #b5b8bc;
    background: #fff;
    font-family: Roboto, sans-serif;
    font-size: 13px;
}

.pager input {
    width: 40px;
    margin: 0 2px;
    padding: 0 5px;
}

.pager span + .pager-sep {
    margin-right: 2px;
}

.select {
    position: relative;
    margin-left: 2px;
}

.select select {
    display: block;
    width: 66px;
    padding-left: 5px;
    appearance: none;
}

.select svg {
    position: absolute;
    top: 2px;
    right: 2px;
    width: 18px;
    height: 18px;
    pointer-events: none;
}

.total {
    margin-left: auto;
}

.cli {
    align-self: flex-end;
    flex: none;
    width: 80px;
    height: 21px;
    margin: 11px 95px 0 0;
    border: 1px solid #888;
    border-bottom: none;
    border-radius: 3px 3px 0 0;
    background: linear-gradient(#fff, #eee);
    font-family: Roboto, "Noto Sans CJK SC", sans-serif;
    font-weight: 700;
    font-size: 13px;
    color: #a60000;
}

.copyright {
    flex: none;
    height: 23px;
    line-height: 26px;
    text-align: center;
    color: #fff;
}

/* 任务栏 */
.taskbar {
    position: relative;
    display: flex;
    align-items: center;
    flex: none;
    height: 39px;
    border-top: 1px solid #d5e1ee;
    background: linear-gradient(90deg, #8294ab 59px, #a6bfdc 59px);
}

.start {
    width: 59px;
    padding-right: 4px;
}

.start svg {
    width: 37px;
    height: 37px;
}

.task {
    width: 59px;
    height: 38px;
    border: 1px solid #66788e;
    border-radius: 2px;
    background: linear-gradient(120deg, #fff, #ccd9e7 70%);
}

.task svg {
    width: 32px;
    height: 32px;
}

.cmd {
    width: 30px;
    height: 25px;
    margin: 0 0 3px 17px;
    align-items: flex-start;
    justify-content: flex-start;
    border: 1px solid #999;
    border-top: 3px solid #c9c9c9;
    background: #000;
    font-family: "DejaVu Sans Mono", monospace;
    font-size: 9px;
    line-height: 12px;
    color: #fff;
}

.cmd span {
    padding-left: 3px;
}

.tray {
    display: flex;
    align-items: center;
    height: 100%;
    margin-left: auto;
    padding-left: 44px;
    background: linear-gradient(90deg, #a6bfdc, #8496ac 40px);
    color: #fff;
}

.lang {
    margin-right: 7px;
    font-family: "Liberation Mono", monospace;
}

.tray-ime {
    width: 10px;
    height: 16px;
    margin-left: 10px;
}

.tray-up {
    width: 8px;
    height: 5px;
    margin: 6px 16px 0 10px;
}

.clock {
    display: flex;
    flex-direction: column;
    align-items: center;
    margin: 0 5px 0 35px;
    font-family: "Open Sans", sans-serif;
    line-height: 18px;
}

.desktop {
    width: 15px;
    height: 38px;
    border: 1px solid #55667c;
    background: linear-gradient(135deg, #a7b4c4, #62748a);
}

.watermark {
    position: absolute;
    top: 0;
    right: 2px;
    font-family: Roboto, sans-serif;
    font-size: 25px;
    line-height: 32px;
    color: rgba(225, 225, 225, 0.75);
    white-space: nowrap;
    pointer-events: none;
}
```
